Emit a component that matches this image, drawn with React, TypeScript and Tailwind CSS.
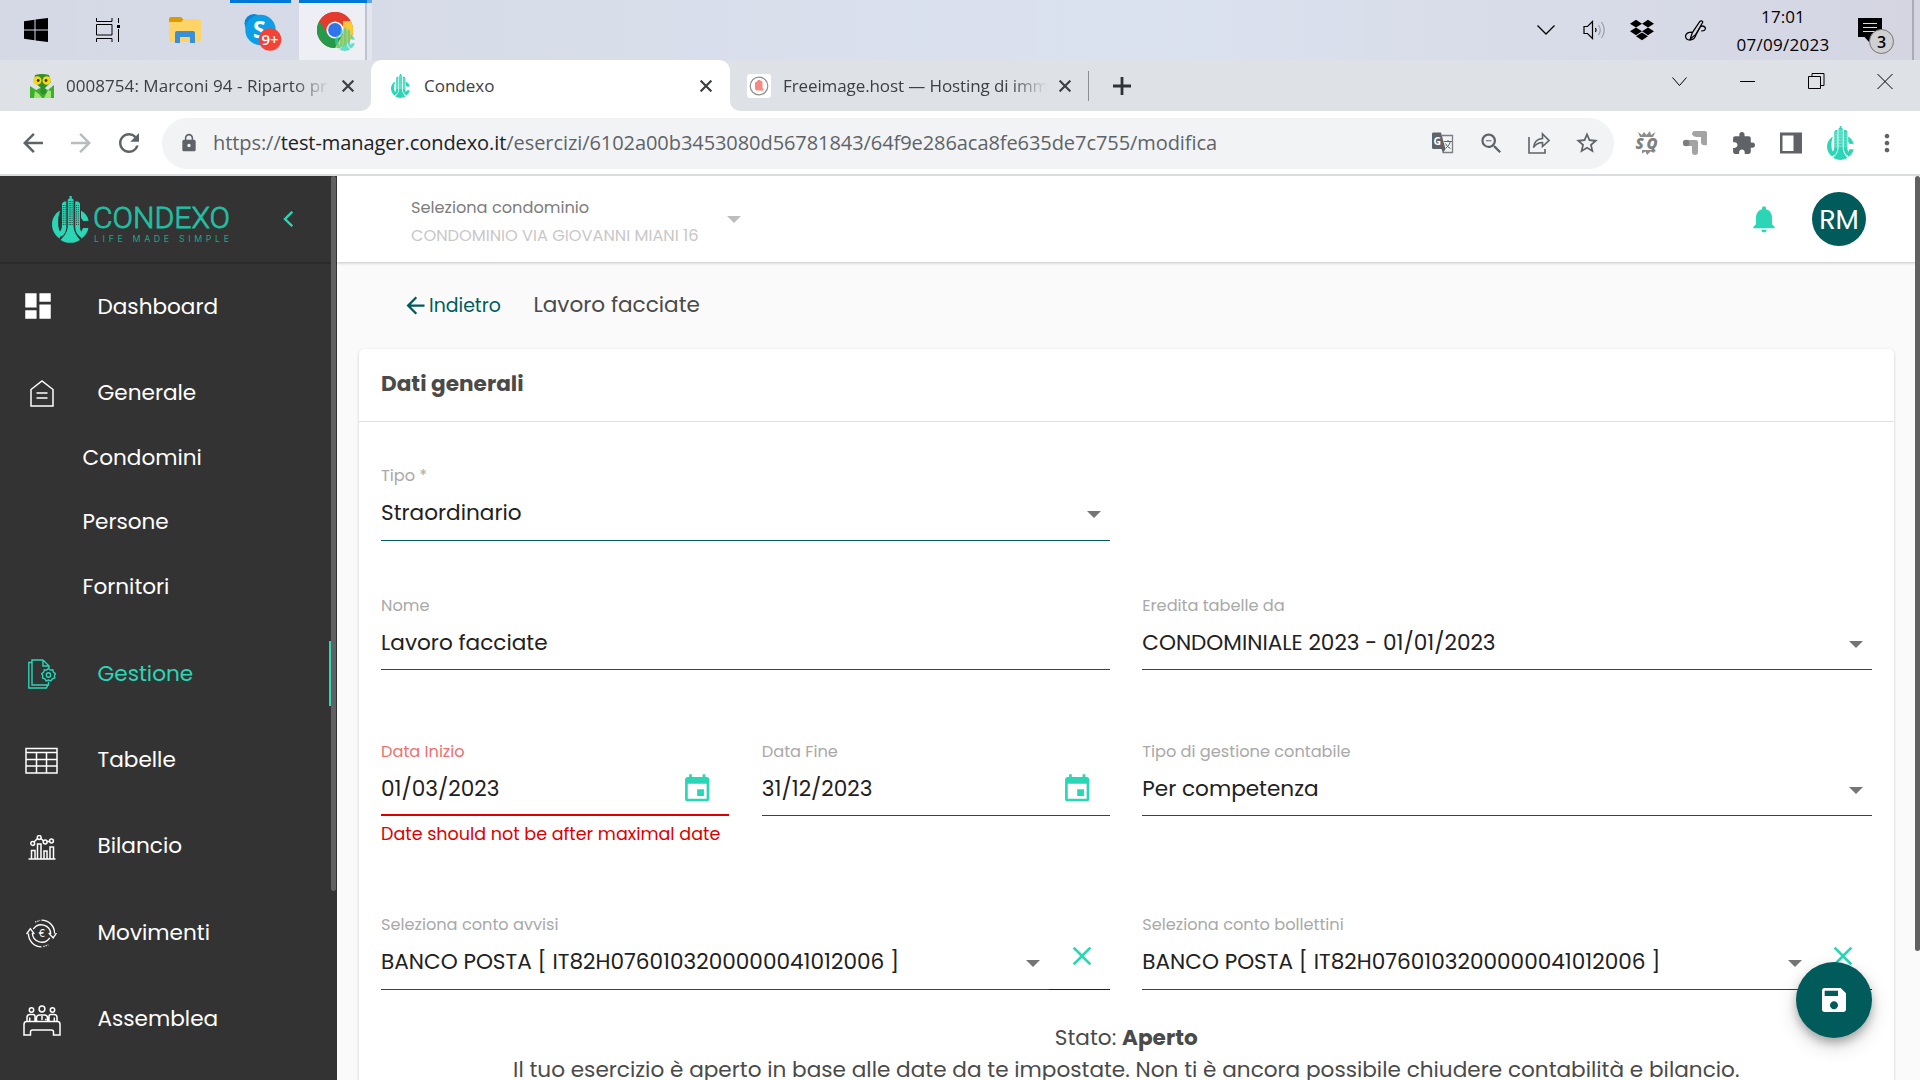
import type { ReactNode } from "react";
import {
  MdArrowBack,
  MdArrowForward,
  MdClose,
  MdDashboard,
  MdEvent,
  MdExtension,
  MdLock,
  MdMoreVert,
  MdNotifications,
  MdRefresh,
  MdSave,
  MdStarBorder,
  MdZoomOut,
} from "react-icons/md";
import { FaDropbox } from "react-icons/fa";

const POPPINS = "font-['Poppins','Inter',sans-serif]";
const SEGOE = "font-['Segoe_UI','Open_Sans',sans-serif]";

/* ---------- logo ---------- */

function CondexoMark({ className, windows = "#333333" }: { className?: string; windows?: string }) {
  return (
    <svg viewBox="0 0 37 47" className={className} fill="#2bd6b6" preserveAspectRatio="none">
      <path d="M8 14.500C3 17.500 0 22.500 0 28.500c0 5.600 2.800 10.500 7.200 14L10 38.500C7.500 35.500 6.200 32 6.200 28.500V22z" />
      <path d="M29 14.500c4 2.400 6.600 5.800 7.700 10.200l-5.500 0.300-2.200-3.200z" />
      <path d="M31 32h5.500c-1 4.600-3.400 8-7 10.500L26.600 38.500c2-1.700 3.600-3.900 4.400-6.500z" />
      <path d="M10 7.500l2-2h2.300V31c0 4-1.500 7-4.500 9.500-1.700-1.700-2-2.500-2.500-4C9.500 34 10 32 10 29z" />
      <path d="M28 7.500l-2-2h-2.800V31c0 4 1.500 7 4.500 9.500 1.700-1.700 1.500-2.500 2-4C28 34 28 32 28 29z" />
      <path d="M15.800 3.500l1.700-1V0h2.200v2.500l1.800 1V30c0 5 2.500 9.500 6.500 14-6 3.800-13.500 3.800-19.500 0 4.500-4.500 7.300-9 7.300-14z" />
      <g stroke={windows} strokeWidth="0.9" strokeDasharray="1 1.100" fill="none">
        <path d="M11.300 9v21M13.100 9v21M17.200 5v25M18.700 5v25M20.200 5v25M24.500 9v21M26.400 9v21" />
      </g>
    </svg>
  );
}

/* ---------- taskbar ---------- */

function ChromeIcon() {
  return (
    <svg viewBox="0 0 36 36" className="h-9 w-9">
      <circle cx="18" cy="18" r="18" fill="#e33b2e" />
      <path d="M2.400 9A18 18 0 0 0 18 36l8-13.500L18 18z" fill="#249a4a" />
      <path d="M33.600 9A18 18 0 0 1 18 36l8-14V9z" fill="#fcc934" />
      <path d="M2.400 9a18 18 0 0 1 31.200 0H18l-7.500 13z" fill="#e33b2e" />
      <circle cx="18" cy="18" r="8.600" fill="#fff" />
      <circle cx="18" cy="18" r="6.900" fill="#2f74ea" />
    </svg>
  );
}

function Taskbar() {
  return (
    <div
      className={`flex h-[60px] bg-gradient-to-r from-[#d5d8e5] via-[#dbe2ef] via-60% to-[#d5d5e2] ${SEGOE}`}
    >
      <div className="flex w-[72px] items-center justify-center">
        <svg viewBox="0 0 24 24" className="h-6 w-6">
          <path d="M0 3.200L10.500 1.800V11.500H0zM11.500 1.600L24 0V11.500H11.500zM0 12.500H10.500V22.200L0 20.800zM11.500 12.500H24V24L11.500 22.400z" />
        </svg>
      </div>
      <div className="flex w-[72px] items-center justify-center">
        <svg viewBox="0 0 24 24" className="h-6 w-6" fill="none" stroke="#000" strokeWidth="1">
          <path d="M.5 0v3.500h15.500V0M.5 24v-3.500h15.500V24M.5 6.500h15.500v10.500H.5zM22.500 0v5M22.500 11v13" />
          <path d="M21 7h3v3h-3z" fill="#000" stroke="none" />
        </svg>
      </div>
      <div className="flex w-[82px] items-center justify-center">
        <svg viewBox="0 0 32 27" className="h-[27px] w-8">
          <path d="M0 2Q0 0 2 0h10l3 3-3 4H0z" fill="#dd9b00" />
          <path d="M0 5h12l3-3h15q2 0 2 2v19q0 2-2 2H2q-2 0-2-2z" fill="#ffd466" />
          <path d="M6 16q0-2 2-2h16q2 0 2 2v10h-5v-6H11v6H6z" fill="#3a8fd9" />
        </svg>
      </div>
      <div className="ml-1 w-[61px] border-t-[3px] border-[#0078d7] pt-[11px] pl-[14px]">
        <svg viewBox="0 0 38 38" className="h-[38px] w-[38px]">
          <circle cx="10" cy="9.500" r="9.500" fill="#0a86d9" />
          <circle cx="21" cy="21" r="10" fill="#0a72d0" />
          <circle cx="16.500" cy="16" r="15.200" fill="#0c9fe8" />
          <text x="9" y="23.500" fontSize="23" fontWeight="700" fill="#fff" fontFamily="Open Sans">
            S
          </text>
          <circle cx="26" cy="25.500" r="11.300" fill="#f44336" />
          <text x="17.500" y="30.800" fontSize="15" fontWeight="600" fill="#fff" fontFamily="Open Sans">
            9+
          </text>
        </svg>
      </div>
      <div className="relative ml-2 w-[66px] border-t-[3px] border-[#0078d7] bg-[#eeeff5] pt-[9px] pl-[18px]">
        <ChromeIcon />
        <CondexoMark className="absolute top-[24px] left-[36px] h-[24px] w-[20px] opacity-70" windows="#b9a84c" />
      </div>
      <div className="w-[2px] border-t-[3px] border-[#0078d7] bg-[#bfc3d0]" />
      <div className="w-[5px] border-t-[3px] border-[#5fa8e6] bg-[#e3e6ef]" />

      <div className="ml-auto flex">
        <div className="flex items-center">
          <svg viewBox="0 0 18 10" className="h-[10px] w-[18px]" fill="none" stroke="#000" strokeWidth="1.300">
            <path d="M.5.500L9 9 17.500.500" />
          </svg>
          <svg viewBox="0 0 24 20" className="ml-[28px] h-5 w-6" fill="none" stroke="#000" strokeWidth="1.200">
            <path d="M1 6.500h3.500L9.500 1.500v17L4.500 13.500H1zM12.500 8q1.200 2 0 4" />
            <path d="M15.500 5q3.500 5 0 10M18.500 2q5.500 8 0 16" stroke="#9a9ca6" />
          </svg>
          <FaDropbox className="ml-[23px] h-[24px] w-[24px]" />
          <svg viewBox="0 0 20 20" className="ml-[31px] h-[21px] w-[21px]" fill="none" stroke="#000" strokeWidth="1.200">
            <path d="M5 18L7 12 14 1.500q2-1.500 3 .5L10 14zM6.500 11.500q-5.500 0-6 4 .3 4 5 3.500 3.500-.5 5-5L15 6q3-1 4.500 1.500 0 3-4 2.800" />
          </svg>
        </div>
        <div className="ml-[29px] flex w-[96px] flex-col items-center pt-[3px] text-[17px] leading-7 whitespace-nowrap">
          <span className="tracking-[0.1px]">17:01</span>
          <span className="tracking-[0.300px]">07/09/2023</span>
        </div>
        <div className="relative ml-[27px] w-[54px] pt-[18px]">
          <svg viewBox="0 0 24 24" className="h-6 w-6">
            <path d="M0 0h24v19H15.500L11 24 6.500 19H0z" />
            <path d="M5 5.500h14M5 9.500h14M5 13.500h14" stroke="#dcdce6" strokeWidth="1" />
          </svg>
          <span className="absolute top-[29px] left-[11px] flex h-[25px] w-[25px] items-center justify-center rounded-full border border-[#777] bg-[#d0d0d2] text-[16px] font-semibold">
            3
          </span>
        </div>
        <div className="w-[2px] bg-[#a9abb9]" />
        <div className="w-[6px]" />
      </div>
    </div>
  );
}

/* ---------- browser chrome ---------- */

function TabClose() {
  return (
    <svg viewBox="0 0 12 12" className="h-3 w-3 shrink-0" stroke="#3c4043" strokeWidth="2.200">
      <path d="M.6.600l10.800 10.800M11.400.600L.6 11.400" />
    </svg>
  );
}

function TabStrip() {
  return (
    <div className={`flex h-[51px] bg-[#dee1e6] text-[17px] text-[#3c4043] ${SEGOE}`}>
      <div className="w-[371px] bg-white">
        <div className="flex h-full items-center rounded-br-[10px] bg-[#dee1e6] pl-[30px]">
          <svg viewBox="0 0 24 24" className="h-6 w-6">
            <path d="M0 12l6 4 6-3 6 3 6-5v13H0z" fill="#3fae2a" />
            <path d="M4 24l1-7 4 3 3 4zM14 24l4-8 3 1v7z" fill="#a5e27a" />
            <path d="M5 1q7-2 14 0l2 7-6 6 2 4-4 3-3-3 1-4-7-6z" fill="#2f8f2b" />
            <circle cx="7.300" cy="6.500" r="4.200" fill="#f4d816" />
            <circle cx="16.700" cy="6.500" r="4.200" fill="#f4d816" />
            <circle cx="8.200" cy="6.500" r="1.400" fill="#402a10" />
            <circle cx="16" cy="6.500" r="1.400" fill="#402a10" />
          </svg>
          <span className="ml-3 w-[264px] overflow-hidden tracking-[0.05px] whitespace-nowrap [mask-image:linear-gradient(to_right,black_86%,transparent)]">
            0008754: Marconi 94 - Riparto pr
          </span>
          <span className="ml-3">
            <TabClose />
          </span>
        </div>
      </div>
      <div className="flex w-[359px] items-center rounded-t-[11px] bg-white pl-5">
        <CondexoMark className="h-6 w-[19px]" windows="#ffffff" />
        <span className="ml-[14px]">Condexo</span>
        <span className="mr-[18px] ml-auto">
          <TabClose />
        </span>
      </div>
      <div className="bg-white">
        <div className="flex h-full items-center rounded-bl-[10px] bg-[#dee1e6] pl-[17px]">
          <svg viewBox="0 0 24 24" className="h-6 w-6">
            <rect width="24" height="24" rx="3" fill="#fff" />
            <circle cx="12" cy="12" r="8.800" fill="none" stroke="#8f8f8f" strokeWidth="1.200" />
            <path d="M8 8.500l2-1 1-1.500h2l1 1 1.500.5V14l1.500 2.500H9l-1-2z" fill="#f48a83" />
          </svg>
          <span className="ml-3 w-[264px] overflow-hidden tracking-[-0.1px] whitespace-nowrap [mask-image:linear-gradient(to_right,black_86%,transparent)]">
            Freeimage.host — Hosting di imm
          </span>
          <span className="ml-3">
            <TabClose />
          </span>
          <span className="ml-[17px] h-[30px] w-px bg-[#8b8f94]" />
          <svg viewBox="0 0 18 18" className="ml-6 h-[18px] w-[18px]" stroke="#303336" strokeWidth="2.800">
            <path d="M9 0v18M0 9h18" />
          </svg>
        </div>
      </div>
      <svg
        viewBox="0 0 224 16"
        className="mt-[13px] mr-[26px] ml-auto h-4 w-[224px]"
        fill="none"
        stroke="#000"
        strokeWidth="1"
      >
        <path d="M2.500 4.500l7 8 7-8M70 8.500h15M138.500 3.500h12v12h-12zM142 3.500v-3h12v12h-3M207.500 1l15 15M222.500 1l-15 15" />
      </svg>
    </div>
  );
}

function Slot({ children }: { children: ReactNode }) {
  return <span className="flex w-12 items-center justify-center">{children}</span>;
}

function Toolbar() {
  return (
    <div
      className={`flex h-[65px] items-center border-b-2 border-[#dadce0] bg-white pt-[1px] pl-[9px] text-[#5f6368] ${SEGOE}`}
    >
      <Slot>
        <MdArrowBack className="-ml-px h-[30px] w-[30px]" />
      </Slot>
      <Slot>
        <MdArrowForward className="h-[30px] w-[30px] text-[#b9bbbe]" />
      </Slot>
      <Slot>
        <MdRefresh className="-ml-px h-[30px] w-[30px]" />
      </Slot>
      <div className="ml-[9px] flex h-[51px] w-[1452px] items-center rounded-full bg-[#f1f3f4] pl-[17px]">
        <MdLock className="h-[20px] w-[20px]" />
        <span className="ml-[14px] text-[20px] tracking-[-0.07px] whitespace-nowrap">
          https://<span className="text-[#202124]">test-manager.condexo.it</span>
          /esercizi/6102a00b3453080d56781843/64f9e286aca8fe635de7c755/modifica
        </span>
        <div className="mr-[3px] ml-auto flex">
          <Slot>
            <svg viewBox="0 0 22 22" className="h-[22px] w-[22px]">
              <path d="M10 3.500h10.500v17H10.500" fill="none" stroke="#7b7f83" strokeWidth="1.300" />
              <path d="M1 .500h8l4.500 16.500H1.500Q0 17 0 15.500V2Q0 .500 1 .500z" fill="#5f6368" />
              <path d="M9.500 17h4l-2.500 4z" fill="#5f6368" />
              <text x="1.500" y="12.500" fontSize="10.500" fontWeight="700" fill="#fff" fontFamily="Open Sans">
                G
              </text>
              <path d="M12 9.500h8M16 8v1.500M18.500 9.500q-1 4-5 7M13.500 11.500q1.500 3.500 5 5" fill="none" stroke="#5f6368" />
            </svg>
          </Slot>
          <Slot>
            <MdZoomOut className="h-[27px] w-[27px]" />
          </Slot>
          <Slot>
            <svg viewBox="0 0 22 22" className="h-[22px] w-[22px]" fill="none" stroke="#5f6368" strokeWidth="1.600">
              <path d="M1 5v16h16v-4M5.500 15.500Q6.500 7 14.500 6.500V2L21 8.500 14.500 14.500v-4Q9 10.500 5.500 15.500z" />
            </svg>
          </Slot>
          <Slot>
            <MdStarBorder className="h-[26px] w-[26px]" />
          </Slot>
        </div>
      </div>
      <div className="ml-[9px] flex">
        <Slot>
          <svg viewBox="0 0 24 24" className="h-6 w-6">
            <path
              d="M3 1l4 3L9 1 11.500 4 15 0l1 4 4.500-3L18 6H5zM7 19h11l1.500 3-4-1.500L12 24l-1.500-3.500-3.500 2z"
              fill="#8c8c8c"
            />
            <text
              x="0.500"
              y="17.800"
              fontSize="15"
              fontWeight="800"
              fontStyle="italic"
              fill="#808080"
              fontFamily="Open Sans"
              textLength="22"
            >
              SQ
            </text>
          </svg>
        </Slot>
        <Slot>
          <svg viewBox="0 0 24 24" className="h-6 w-6" fill="#a3a3a3">
            <path d="M12 0h10q2 0 2 2v12q-6 1-6-3V6h-4q-4 0-5-3 0-3 3-3z" />
            <path d="M3 9h10q2 0 2 2v10q0 3-3 3t-3-3v-6H3q-3 0-3-3t3-3z" />
            <circle cx="3.200" cy="12" r="3.200" fill="#7e7e7e" />
          </svg>
        </Slot>
        <Slot>
          <MdExtension className="h-[25px] w-[25px]" />
        </Slot>
        <Slot>
          <svg viewBox="0 0 22 22" className="h-[22px] w-[22px]" fill="#5f6368">
            <path d="M0 .500h22v21H0zM2.500 3.500v15.500h11V3.500z" fillRule="evenodd" />
          </svg>
        </Slot>
        <Slot>
          <CondexoMark className="ml-[2px] h-[34px] w-[27px]" windows="#c9f5ec" />
        </Slot>
        <Slot>
          <MdMoreVert className="h-[28px] w-[28px]" />
        </Slot>
      </div>
    </div>
  );
}

/* ---------- sidebar ---------- */

const icons: Record<string, ReactNode> = {
  dashboard: <MdDashboard className="-ml-[7px] h-[34px] w-[34px]" />,
  generale: (
    <svg viewBox="0 0 24 27" className="mt-[2px] h-[27px] w-6" fill="none" stroke="#fff" strokeWidth="1.500">
      <path d="M1 26V9.500L12 1l11 8.500V26zM6.500 13h11M6.500 18h11" />
    </svg>
  ),
  gestione: (
    <svg viewBox="0 0 28 30" className="mt-[1px] h-[30px] w-7" fill="none" stroke="#2bd6b6" strokeWidth="1.400">
      <path d="M15 1H4v25h16.500v-3M15 1l6 6v2M15 1v6h6M4 3.500H.8v25.500H18.500l1-2.500" />
      <circle cx="20.500" cy="16" r="2.200" />
      <path d="M20.500 9.500l1.800 1.600 2.500-.3.600 2.300 2 1.500-1 2 .3 2.400-2.400.8-1.400 2.100-2.400-.9-2.400.9-1.300-2.100-2.300-.8.200-2.400-1-2 2-1.500.6-2.300 2.400.3z" />
    </svg>
  ),
  tabelle: (
    <svg viewBox="0 0 33 27" className="mt-[2px] h-[27px] w-[33px]" fill="none" stroke="#fff" strokeWidth="1.500">
      <path d="M1 1.500h31v24.500H1zM1 5.500h31M1 12.500h31M1 19h31M11.500 5.500V26M21.500 5.500V26" />
    </svg>
  ),
  bilancio: (
    <svg viewBox="0 0 28 25" className="mt-[2px] h-[25px] w-7" fill="none" stroke="#fff" strokeWidth="1.500">
      <path d="M.5 24h27M3.500 24v-8.500h3.500V24M9.500 24V9h3.500v15M16 24v-8h3v8M22 24V12h3.500v12M6 7l3.500-3.500M13 3.500L15.500 6M19 6.500h2.500" />
      <circle cx="4.700" cy="8.500" r="1.900" />
      <circle cx="11.200" cy="2.500" r="1.900" />
      <circle cx="17.200" cy="7" r="1.900" />
      <circle cx="23.500" cy="6" r="1.900" />
    </svg>
  ),
  movimenti: (
    <svg viewBox="0 0 32 30" className="mt-[2px] h-[29px] w-[31px]" fill="none" stroke="#fff" strokeWidth="1.400">
      <path d="M16 1.200A13.500 13.500 0 0 1 29.500 15M31.500 14.500L28 19.500 23.500 14.500M25.500 15.500A9.800 9.800 0 0 0 7.500 10.500M16 28.800A13.500 13.500 0 0 1 2.500 15M.5 15.500L4.500 10 8.500 15.500M6.500 14.500A9.800 9.800 0 0 0 24.500 19.500" />
      <path d="M9.500 3.200l5-1.800M18 28.600l5-1.800" strokeDasharray="1.200 1.200" />
      <text x="12.800" y="19" fontSize="10.500" fontWeight="400" fill="#fff" stroke="none" fontFamily="Inter">
        €
      </text>
    </svg>
  ),
  assemblea: (
    <svg viewBox="0 0 38 31" className="mt-[3px] h-[31px] w-[38px]" fill="none" stroke="#fff" strokeWidth="1.500">
      <path d="M3.500 16.500h31q2.500 0 2.500 3V30h-6.500v-3q0-2-2-2h-19q-2 0-2 2v3H1V19.500q0-3 2.500-3z" />
      <circle cx="8.500" cy="5" r="2.200" />
      <circle cx="29.500" cy="5" r="2.200" />
      <circle cx="19" cy="4" r="2.900" />
      <path d="M4 16v-3.500q0-3 3-3h3q2 0 2 2V16M34 16v-3.500q0-3-3-3h-3q-2 0-2 2V16M13.500 16v-3q0-3 3-3h5q3 0 3 3v3M6.700 12.500V16M31.300 12.500V16M19 11v4M22 14.500h1.500" />
    </svg>
  ),
};

interface NavItem {
  label: string;
  icon?: string;
  active?: boolean;
  gap?: boolean;
}

const NAV: NavItem[] = [
  { label: "Dashboard", icon: "dashboard", gap: true },
  { label: "Generale", icon: "generale" },
  { label: "Condomini" },
  { label: "Persone" },
  { label: "Fornitori", gap: true },
  { label: "Gestione", icon: "gestione", gap: true, active: true },
  { label: "Tabelle", icon: "tabelle", gap: true },
  { label: "Bilancio", icon: "bilancio", gap: true },
  { label: "Movimenti", icon: "movimenti", gap: true },
  { label: "Assemblea", icon: "assemblea", gap: true },
];

function Sidebar() {
  return (
    <aside className="relative w-[337px] shrink-0 overflow-hidden bg-[#333333] text-white">
      <div className="flex h-[88px] border-b-2 border-[#2b2b2b] pt-5 pl-[52px]">
        <CondexoMark className="h-[47px] w-[37px]" />
        <svg viewBox="0 0 136 47" className="ml-[5px] h-[47px] w-[136px]">
          <text
            x="-1"
            y="32"
            fontSize="29"
            fontWeight="300"
            fill="#22bfa2"
            stroke="#22bfa2"
            strokeWidth="0.800"
            textLength="137"
            lengthAdjust="spacingAndGlyphs"
            fontFamily="Roboto"
          >
            CONDEXO
          </text>
          <text x="0" y="46" fontSize="8.800" fill="#1fa48c" textLength="135" fontFamily="Inter">
            LIFE MADE SIMPLE
          </text>
        </svg>
        <svg viewBox="0 0 10 16" className="mt-[15px] ml-[53px] h-4 w-[10px]" fill="none" stroke="#2bd6b6" strokeWidth="2.400">
          <path d="M9.300.800L2 8l7.300 7.200" />
        </svg>
      </div>
      <nav className="pt-[9.800px]">
        {NAV.map((item) => (
          <div
            key={item.label}
            className={`flex h-[64.800px] w-[331px] items-center text-[21.600px] ${item.gap ? "mb-[21.600px]" : ""} ${
              item.active ? "border-r-2 border-[#2bd6b6] text-[#2bd6b6]" : ""
            } ${item.icon ? "" : "pl-[82.500px]"}`}
          >
            {item.icon && (
              <span className="mr-[14px] flex w-[83.500px] items-center justify-center">{icons[item.icon]}</span>
            )}
            <span className="pt-px">{item.label}</span>
          </div>
        ))}
      </nav>
      <div className="absolute top-0 left-[331px] h-[715px] w-[5px] rounded-full bg-[#616161]" />
    </aside>
  );
}

/* ---------- form ---------- */

function Caret({ className = "" }: { className?: string }) {
  return (
    <svg viewBox="0 0 14 7" className={`h-[7px] w-[14px] shrink-0 ${className}`} fill="currentColor">
      <path d="M0 0h14L7 7z" />
    </svg>
  );
}

interface FieldProps {
  label: string;
  value: string;
  error?: string;
  children?: ReactNode;
  clearable?: boolean;
  dense?: boolean;
}

function Field({ label, value, error, children, clearable, dense }: FieldProps) {
  return (
    <div className="relative">
      <div className={`flex ${dense ? "h-[76px]" : "h-[77px]"}`}>
        <div
          className={`flex min-w-0 flex-1 flex-col ${error ? "border-b-2 border-[#de0000]" : "border-b border-[#005b5a]"}`}
        >
          <span
            className={`pt-px text-[16.200px] leading-[22px] whitespace-nowrap ${
              error ? "text-[#ef7070]" : "text-[#a9a9a9]"
            }`}
          >
            {label}
          </span>
          <div className="mt-[10.500px] flex h-8 shrink-0 items-center justify-between">
            <span className="text-[21.600px] whitespace-nowrap text-[#212121]">{value}</span>
            {children}
          </div>
        </div>
        {clearable && (
          <div className="w-[61px] border-b border-[#212121]">
            <MdClose className="mt-[27px] ml-[16.500px] h-[32px] w-[32px] text-[#2bd6b6]" />
          </div>
        )}
      </div>
      {error && (
        <span className="absolute top-[83px] left-0 text-[17.550px] leading-[22px] whitespace-nowrap text-[#de0000]">
          {error}
        </span>
      )}
    </div>
  );
}

const selectCaret = <Caret className="mt-px mr-[9px] text-[#757575]" />;
const dateIcon = <MdEvent className="mr-[16.500px] h-[32.400px] w-[32.400px] shrink-0 text-[#2bd6b6]" />;

function Main() {
  return (
    <main className="relative min-w-0 flex-1 overflow-hidden bg-[#fafafa]">
      <header className="flex h-[86px] items-center bg-white pl-[74px] shadow-[0_1px_3px_rgba(0,0,0,0.22)]">
        <div className="flex w-[330px] items-center">
          <div className="flex w-[316px] flex-col pt-[5px] text-[16.200px] leading-7 whitespace-nowrap">
            <span className="text-[#7d7d7d]">Seleziona condominio</span>
            <span className="text-[#c8c8c8]">CONDOMINIO VIA GIOVANNI MIANI 16</span>
          </div>
          <Caret className="text-[#bdbdbd]" />
        </div>
        <MdNotifications className="ml-auto h-[32px] w-[32px] text-[#2bd6b6]" />
        <div className="mr-[54px] ml-8 flex h-[54px] w-[54px] items-center justify-center rounded-full bg-[#005b5a] pt-[2px] text-[27px] text-white">
          RM
        </div>
      </header>

      <div className="flex h-[87px] items-center pl-[65px] text-[#4a4a4a]">
        <div className="flex items-center text-[#005b5a]">
          <MdArrowBack className="h-[27px] w-[27px]" />
          <span className="pt-[2px] text-[18.900px]">Indietro</span>
        </div>
        <span className="mb-px ml-[32.500px] text-[21.600px]">Lavoro facciate</span>
      </div>

      <section className="ml-[22px] h-[760px] w-[1534.500px] rounded-[5px] bg-white text-[#4a4a4a] shadow-[0_1px_3px_rgba(0,0,0,0.2)]">
        <h2 className="flex h-[73px] items-center border-b border-[#e0e0e0] pl-[22px] text-[21.600px] font-bold">
          <span className="mb-[2px]">Dati generali</span>
        </h2>
        <div className="grid grid-cols-2 gap-x-8 px-[22px] pt-[42px]">
          <Field label="Tipo *" value="Straordinario">
            {selectCaret}
          </Field>
          <div />
          <div className="mt-[53px]">
            <Field label="Nome" value="Lavoro facciate" dense />
          </div>
          <div className="mt-[53px]">
            <Field label="Eredita tabelle da" value="CONDOMINIALE 2023 - 01/01/2023" dense>
              {selectCaret}
            </Field>
          </div>
          <div className="mt-[70px] grid grid-cols-2 gap-x-[32.400px]">
            <Field label="Data Inizio" value="01/03/2023" error="Date should not be after maximal date" dense>
              {dateIcon}
            </Field>
            <Field label="Data Fine" value="31/12/2023" dense>
              {dateIcon}
            </Field>
          </div>
          <div className="mt-[70px]">
            <Field label="Tipo di gestione contabile" value="Per competenza" dense>
              {selectCaret}
            </Field>
          </div>
          <div className="mt-[97px]">
            <Field label="Seleziona conto avvisi" value="BANCO POSTA [ IT82H0760103200000041012006 ]" clearable>
              {selectCaret}
            </Field>
          </div>
          <div className="mt-[97px]">
            <Field label="Seleziona conto bollettini" value="BANCO POSTA [ IT82H0760103200000041012006 ]" clearable>
              {selectCaret}
            </Field>
          </div>
        </div>
        <div className="mt-8 text-center text-[21.600px] leading-8 whitespace-nowrap">
          <p>
            Stato: <b>Aperto</b>
          </p>
          <p>
            Il tuo esercizio è aperto in base alle date da te impostate. Non ti è ancora possibile chiudere contabilità e
            bilancio.
          </p>
        </div>
      </section>

      {/* floating save button */}
      <button className="absolute top-[786px] right-[48px] flex h-[76px] w-[76px] items-center justify-center rounded-full bg-[#005b5a] text-white shadow-[0_5px_8px_rgba(0,0,0,0.25),0_8px_20px_rgba(0,0,0,0.16)]">
        <MdSave className="h-[32px] w-[32px]" />
      </button>
      <div className="absolute top-0 right-0 h-[775px] w-[5px] rounded-full bg-[#616161]" />
    </main>
  );
}

export default function App() {
  return (
    <div className="flex h-[1080px] w-[1920px] flex-col overflow-hidden bg-white">
      <Taskbar />
      <TabStrip />
      <Toolbar />
      <div className={`flex min-h-0 flex-1 ${POPPINS}`}>
        <Sidebar />
        <Main />
      </div>
    </div>
  );
}
